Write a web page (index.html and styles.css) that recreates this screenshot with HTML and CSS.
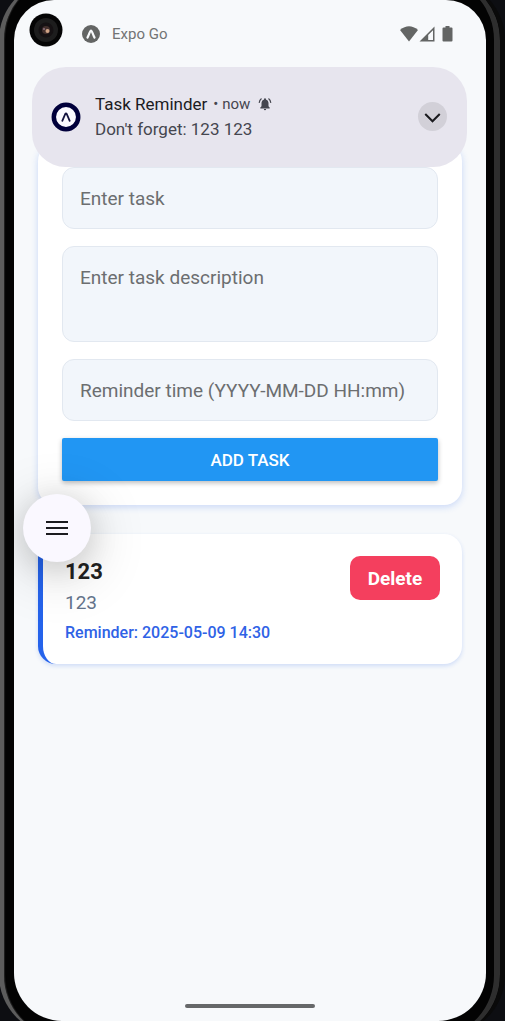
FILE: index.html
```html
<!DOCTYPE html>
<html lang="en">
<head>
<meta charset="utf-8">
<meta name="viewport" content="width=device-width, initial-scale=1">
<title>Task Reminder</title>
<link rel="stylesheet" href="styles.css">
</head>
<body>
<div class="phone">
  <div class="screen">
    <header class="status">
      <svg class="camera" viewBox="0 0 34 34" aria-hidden="true">
        <circle cx="17" cy="17" r="16.500" fill="#050505"/>
        <circle cx="17" cy="17" r="12" fill="#1d1d1d"/>
        <circle cx="17" cy="17" r="7.500" fill="#151113"/>
        <circle cx="17" cy="17" r="4" fill="#43302d"/>
        <circle cx="18.500" cy="18" r="2" fill="#d0a486"/>
        <circle cx="15" cy="16" r="1" fill="#8b7080"/>
      </svg>
      <svg class="expo" viewBox="0 0 18 18" aria-hidden="true">
        <circle cx="9" cy="9" r="9" fill="#636564"/>
        <path d="M5.500 12.500 C7 10.500 7.800 5.500 9 5.500 S11 10.500 12.500 12.500" fill="none" stroke="#f7f9fb" stroke-width="2.200" stroke-linecap="round" stroke-linejoin="round"/>
      </svg>
      <span class="app-name">Expo Go</span>
      <svg class="signals" viewBox="0 0 54 16" aria-hidden="true" fill="#636564">
        <path d="M0 4 Q9-3.500 18 4 L9 15.500Z"/>
        <path fill-rule="evenodd" d="M34.500 .5V15.500H19.500ZM33 4.200 28.200 9V14H33Z"/>
        <path d="M45.500 0h4v1.500h2a1 1 0 0 1 1 1v12a1 1 0 0 1-1 1h-8a1 1 0 0 1-1-1v-12a1 1 0 0 1 1-1h2z"/>
      </svg>
    </header>

    <section class="notice" aria-label="Notification">
      <svg class="notice-icon" viewBox="0 0 30 30" aria-hidden="true">
        <circle cx="15" cy="15" r="12.200" fill="#fbfaff" stroke="#01003b" stroke-width="4.500"/>
        <path d="M11.300 18.800 L14.300 12 Q15 10.600 15.700 12 L18.700 18.800" fill="none" stroke="#14133f" stroke-width="1.800" stroke-linecap="round"/>
      </svg>
      <div class="notice-text">
        <div class="notice-head">
          <span class="notice-title">Task Reminder</span>
          <span class="notice-time">• now</span>
          <svg class="bell" viewBox="0 0 24 24" aria-hidden="true" fill="#45464f">
            <path d="M12 2a1.700 1.700 0 0 1 1.700 1.700v.6A6 6 0 0 1 18 10v6l2 2v1.500H4V18l2-2v-6a6 6 0 0 1 4.300-5.700v-.6A1.700 1.700 0 0 1 12 2zM10 20.500h4a2 2 0 0 1-4 0z"/>
            <path d="M6 2.500Q2.500 5 2 10M18 2.500Q21.500 5 22 10" fill="none" stroke="#45464f" stroke-width="2"/>
          </svg>
        </div>
        <div class="notice-body">Don't forget: 123 123</div>
      </div>
      <button class="expand" type="button" aria-label="Expand notification">
        <svg viewBox="0 0 28 28" aria-hidden="true"><path d="M7 11.500 14 18.500 21 11.500" fill="none" stroke="#1b1b1f" stroke-width="2"/></svg>
      </button>
    </section>

    <main class="content">
      <form class="card form">
        <input class="field" type="text" placeholder="Enter task" aria-label="Task">
        <textarea class="field area" placeholder="Enter task description" aria-label="Task description"></textarea>
        <input class="field" type="text" placeholder="Reminder time (YYYY-MM-DD HH:mm)" aria-label="Reminder time">
        <button class="add" type="button">ADD TASK</button>
      </form>
      <div class="list">
        <button class="fab" type="button" aria-label="Open menu">
          <svg viewBox="0 0 24 18" aria-hidden="true"><path d="M1 3h22M1 9h22M1 15h22" stroke="#1b1b1f" stroke-width="2"/></svg>
        </button>
        <article class="card task">
          <div class="task-text">
            <h2 class="task-title">123</h2>
            <p class="task-desc">123</p>
            <p class="task-time">Reminder: 2025-05-09 14:30</p>
          </div>
          <button class="delete" type="button">Delete</button>
        </article>
      </div>
    </main>
    <div class="home-bar"></div>
  </div>
</div>
</body>
</html>
```
FILE: styles.css
```css
* { box-sizing: border-box; }
body {
  margin: 0;
  background: #0d0e12;
  font-family: Roboto, "Liberation Sans", sans-serif;
}
button, input, textarea { font: inherit; margin: 0; border: 0; }
svg { display: block; }
.phone {
  position: relative;
  min-height: 100vh;
  padding: 0 19px 0 14px;
  display: flex;
  overflow: hidden;
}
.phone::before {
  content: "";
  position: absolute;
  inset: -20px 0 -14px -1px;
  border-radius: 60px;
  background: #030303;
  border-left: 5px solid #5c5c5c;
  border-right: 5px solid #0a0a0a;
  box-shadow: inset 1px 0 1px #222, inset -6px 0 0 #2e2e2e;
}
.screen {
  position: relative;
  flex: 1;
  min-width: 0;
  display: flex;
  flex-direction: column;
  background: #f7f9fb;
  border-radius: 40px 40px 48px 48px;
  overflow: hidden;
}
.status {
  display: flex;
  align-items: center;
  height: 67px;
  padding: 0 32px 0 15px;
}
.camera { width: 34px; height: 34px; margin-bottom: 7px; }
.expo { width: 18px; height: 18px; margin-left: 19px; }
.app-name { margin-left: 12px; font-size: 15px; color: #727474; }
.signals { width: 54px; height: 16px; margin-left: auto; }
.notice {
  position: relative;
  z-index: 1;
  display: flex;
  align-items: center;
  min-height: 100px;
  margin: 0 19px -24px 18px;
  padding: 0 20px 1px 19px;
  border-radius: 34px;
  background: #e7e5ee;
}
.notice-icon { width: 30px; height: 30px; }
.notice-text { flex: 1; margin-left: 14px; line-height: 25px; font-size: 17px; }
.notice-head { display: flex; align-items: center; }
.notice-title { color: #1b1b1f; }
.notice-time { margin-left: 6px; font-size: 15px; color: #45464f; }
.bell { width: 14px; height: 14px; margin-left: 8px; }
.notice-body { color: #45464f; }
.expand {
  width: 29px;
  height: 29px;
  padding: 0;
  border-radius: 50%;
  background: #d2d0d8;
}
.content { flex: 1; padding: 0 24px; }
.card { background: #fff; border-radius: 18px; }
.form {
  display: flex;
  flex-direction: column;
  gap: 17px;
  padding: 24px;
  box-shadow: 0 2px 7px #2563eb38;
}
.field {
  width: 100%;
  height: 62px;
  padding: 0 17px;
  border: 1px solid #e2e8f0;
  border-radius: 12px;
  background: #f2f6fb;
  font-size: 19px;
  color: #222;
}
.area {
  display: block;
  height: 96px;
  padding-top: 19px;
  line-height: 24px;
  resize: none;
}
.field::placeholder { color: #6c6e70; opacity: 1; }
.add {
  height: 43px;
  border-radius: 2px;
  background: #2196f3;
  color: #fff;
  font-size: 17px;
  font-weight: 500;
  box-shadow: 0 2px 5px #0004;
}
.list { position: relative; padding-top: 29px; }
.fab {
  position: absolute;
  top: -11px;
  left: -15px;
  width: 68px;
  height: 68px;
  padding: 0;
  border-radius: 50%;
  background: #faf8ff;
  display: grid;
  place-items: center;
  box-shadow: 0 10px 60px #0003, 0 6px 30px #0002;
}
.fab svg { width: 24px; height: 18px; }
.task {
  display: flex;
  align-items: flex-start;
  justify-content: space-between;
  padding: 22px 22px 19px;
  border-left: 5px solid #2563eb;
  box-shadow: 0 2px 4px #2563eb30;
}
.task-title, .task-desc, .task-time { margin: 0; }
.task-title { font-size: 22px; line-height: 32px; font-weight: 700; color: #222; }
.task-desc { font-size: 19px; line-height: 30px; color: #64748b; }
.task-time { font-size: 16px; line-height: 24px; padding-top: 3px; font-weight: 500; color: #2f62e6; }
.delete {
  width: 90px;
  height: 44px;
  padding: 0;
  border-radius: 10px;
  background: #f43f5e;
  color: #fff;
  font-size: 19px;
  font-weight: 700;
}
.home-bar {
  width: 130px;
  height: 4px;
  margin: 0 auto 13px;
  border-radius: 2px;
  background: #666869;
}
```
